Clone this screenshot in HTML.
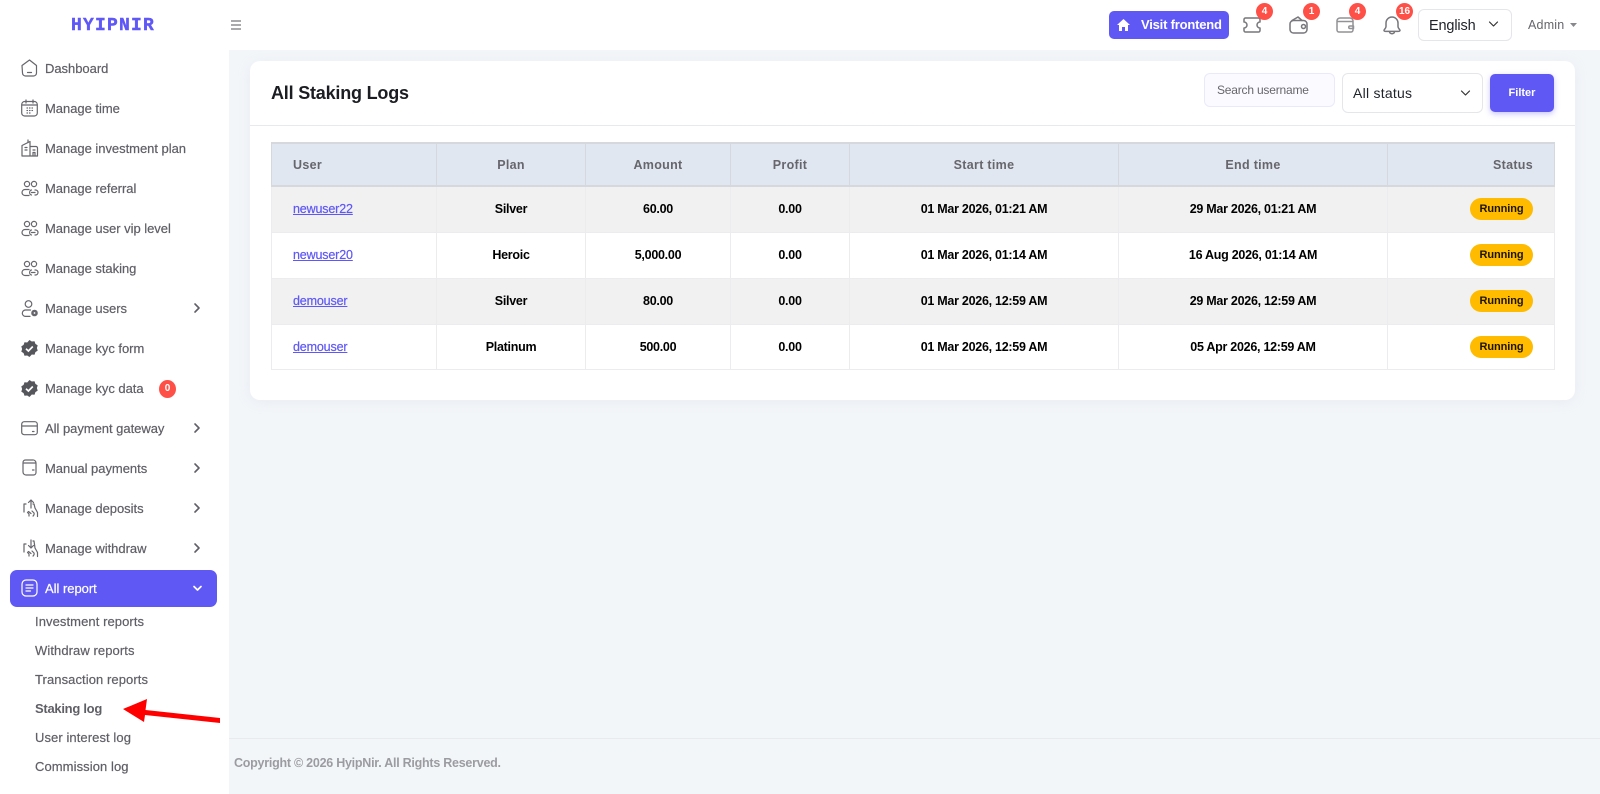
<!DOCTYPE html>
<html lang="en"><head><meta charset="utf-8"><title>All Staking Logs</title>
<style>
*{box-sizing:border-box}
html,body{margin:0;padding:0}
body{width:1600px;height:794px;overflow:hidden;position:relative;background:#f3f6f9;font-family:"Liberation Sans",sans-serif;color:#000}
.a{position:absolute}
.t{position:absolute;white-space:nowrap;line-height:16px}
#side{left:0;top:0;width:229px;height:794px;background:#fff}
#top{left:0;top:0;width:1600px;height:50px;background:#fff}
.m{position:absolute;left:45px;font-size:13px;color:#5f5f66;line-height:16px;white-space:nowrap;letter-spacing:-.03px;transform:translateY(-7px);-webkit-text-stroke:.2px}
.s{position:absolute;left:35px;font-size:13px;color:#5f5f66;line-height:16px;white-space:nowrap;letter-spacing:.08px;transform:translateY(-8px);-webkit-text-stroke:.2px}
svg{position:absolute;overflow:visible}
.ic{fill:none;stroke:#66666c;stroke-width:1.2;stroke-linecap:round;stroke-linejoin:round}
.tic{fill:none;stroke:#77777c;stroke-width:1.5;stroke-linecap:round;stroke-linejoin:round}
.chev{fill:none;stroke:#5f5f66;stroke-width:1.6;stroke-linecap:round;stroke-linejoin:round}
.b{position:absolute;background:#ff5048;color:#fff;border-radius:50%;font-size:10px;font-weight:bold;text-align:center}
#card{left:250px;top:61px;width:1325px;height:339px;background:#fff;border-radius:10px;box-shadow:0 2px 14px rgba(170,180,200,.14)}
table{position:absolute;left:271px;top:142px;width:1283px;border-collapse:collapse;table-layout:fixed;font-size:12.5px}
th{height:43px;background:#e1e7f0;border:1px solid #d5d9de;border-top:2px solid #d5d9de;border-bottom:2px solid #d5d9de;color:#66666c;font-weight:bold;font-size:12.5px;text-align:center;padding:0 21px;letter-spacing:.3px}
td{height:46px;border:1px solid #ececee;text-align:center;padding:0 21px;font-weight:bold;color:#000;letter-spacing:-.27px}
tbody tr:last-child td{height:45px}
tbody tr:nth-child(odd) td{background:#f1f1f1}
.l{text-align:left}.r{text-align:right}
td a{color:#5f58f5;text-decoration:underline;font-weight:normal;letter-spacing:-.15px;-webkit-text-stroke:.2px}
.run{display:inline-block;width:63px;height:22px;line-height:22px;border-radius:11px;background:#ffbb00;color:#1c1400;font-size:11px;font-weight:bold;text-align:center;letter-spacing:-.1px}
</style></head><body>
<div class="a" id="side"></div>
<div class="a" id="top"></div>

<div class="t" style="left:71px;top:17px;font:bold 18px/18px 'Liberation Mono',monospace;letter-spacing:1.2px;color:#5f58f5;-webkit-text-stroke:.4px">HYIPNIR</div>
<svg style="left:231px;top:20px" width="12" height="10"><path d="M0 1h10M0 5h10M0 9h10" stroke="#77777c" stroke-width="1.2" fill="none"/></svg>

<!-- sidebar icons -->
<svg class="ic" style="left:21px;top:59px" width="17" height="18" viewBox="0 0 17 18"><path d="M1 6.500 8.500 1l7 5.500v7.500a3 3 0 0 1-3 3h-8a3 3 0 0 1-3-3z"/><path d="M6.500 13.500h4"/></svg>
<svg class="ic" style="left:21px;top:99px" width="17" height="18" viewBox="0 0 17 18"><rect x=".7" y="2.500" width="15.600" height="14.500" rx="3"/><path d="M1 6h15M5 1v3M12 1v3M6 9h.5M8.500 9H9M11 9h.5M6 11.500h.5M8.500 11.500H9M11 11.500h.5M6 14h.5M8.500 14H9"/></svg>
<svg class="ic" style="left:21px;top:139px" width="17" height="18" viewBox="0 0 17 18"><path d="M1 17V6.500L9 2.500V17M1 17h15.500M9 7.500h6a1.500 1.500 0 0 1 1.500 1.500v8M4 8.500h2M4 11h2M12 11h2M12 13.500h2v3.500h-2z"/><path d="M7 3.500V1"/></svg>
<svg class="ic" style="left:21px;top:181px" width="18" height="15" viewBox="0 0 18 15"><circle cx="6" cy="3" r="2.600"/><circle cx="13" cy="3" r="2.600"/><path d="M8 8.500H4a3 3 0 0 0 0 6h4M10.500 9c-2.500 0-2.500 5 0 5M10.500 11.500h3.500M14 9h.5a2.500 2.500 0 0 1 0 5H14"/></svg>
<svg class="ic" style="left:21px;top:221px" width="18" height="15" viewBox="0 0 18 15"><circle cx="6" cy="3" r="2.600"/><circle cx="13" cy="3" r="2.600"/><path d="M8 8.500H4a3 3 0 0 0 0 6h4M10.500 9c-2.500 0-2.500 5 0 5M10.500 11.500h3.500M14 9h.5a2.500 2.500 0 0 1 0 5H14"/></svg>
<svg class="ic" style="left:21px;top:261px" width="18" height="15" viewBox="0 0 18 15"><circle cx="6" cy="3" r="2.600"/><circle cx="13" cy="3" r="2.600"/><path d="M8 8.500H4a3 3 0 0 0 0 6h4M10.500 9c-2.500 0-2.500 5 0 5M10.500 11.500h3.500M14 9h.5a2.500 2.500 0 0 1 0 5H14"/></svg>
<svg class="ic" style="left:21px;top:300px" width="18" height="17" viewBox="0 0 18 17"><circle cx="7.500" cy="4" r="3.300"/><path d="M9.500 10H4.500a3.200 3.200 0 0 0 0 6.400H9"/><circle cx="13.500" cy="13" r="2.100" stroke-width="2.400"/></svg>
<svg style="left:21px;top:340px" width="17" height="17" viewBox="0 0 17 17"><path fill="#55555c" d="M8.500 0l2.300 1.500 2.700-.2.900 2.600 2.300 1.500-.8 2.600.8 2.600-2.300 1.500-.9 2.600-2.700-.2L8.500 17l-2.300-1.500-2.700.2-.9-2.600L.3 11.600l.8-2.600-.8-2.600 2.300-1.500.9-2.600 2.700.2z"/><path d="M5 8.700l2.400 2.300 4.400-4.500" fill="none" stroke="#fff" stroke-width="1.700"/></svg>
<svg style="left:21px;top:380px" width="17" height="17" viewBox="0 0 17 17"><path fill="#55555c" d="M8.500 0l2.300 1.500 2.700-.2.900 2.600 2.300 1.500-.8 2.600.8 2.600-2.300 1.500-.9 2.600-2.700-.2L8.500 17l-2.300-1.500-2.700.2-.9-2.600L.3 11.600l.8-2.600-.8-2.600 2.300-1.500.9-2.600 2.700.2z"/><path d="M5 8.700l2.400 2.300 4.400-4.500" fill="none" stroke="#fff" stroke-width="1.700"/></svg>
<svg class="ic" style="left:21px;top:421px" width="17" height="15" viewBox="0 0 17 15"><rect x=".7" y=".7" width="15.600" height="13" rx="2.500"/><path d="M1 5h15M11.500 10.500h1.500"/></svg>
<svg class="ic" style="left:22px;top:459px" width="15" height="17" viewBox="0 0 15 17"><path d="M1 4V13a3 3 0 0 0 3 3h7.500a2.500 2.500 0 0 0 2.500-2.500V4M1 4a2.500 2.500 0 0 1 2.500-3h7A3 3 0 0 1 14 4zM10.500 11H12"/></svg>
<svg class="ic" style="left:23px;top:499px" width="15" height="18" viewBox="0 0 15 18"><path d="M3 5H1v8M8 9V1M5.500 3.500 8 1l2.500 2.500M10 5h1l1 4 2.500 4.500v4M6 17v-2l-1.500-1.500 1-1L8 14.500M9 12l2 2c.500 1-.5 3-1 3"/></svg>
<svg class="ic" style="left:23px;top:539px" width="15" height="18" viewBox="0 0 15 18"><path d="M3 5H1v8M8 1v8M5.500 6.500 8 9l2.500-2.500M10 2h1l1 7 2.500 4.500v4M6 17v-2l-1.500-1.500 1-1L8 14.500M9 12l2 2c.500 1-.5 3-1 3"/></svg>

<div class="m" style="top:68px">Dashboard</div>
<div class="m" style="top:108px">Manage time</div>
<div class="m" style="top:148px">Manage investment plan</div>
<div class="m" style="top:188px">Manage referral</div>
<div class="m" style="top:228px">Manage user vip level</div>
<div class="m" style="top:268px">Manage staking</div>
<div class="m" style="top:308px">Manage users</div>
<div class="m" style="top:348px">Manage kyc form</div>
<div class="m" style="top:388px">Manage kyc data</div>
<div class="m" style="top:428px">All payment gateway</div>
<div class="m" style="top:468px">Manual payments</div>
<div class="m" style="top:508px">Manage deposits</div>
<div class="m" style="top:548px">Manage withdraw</div>

<svg class="chev" style="left:194px;top:303px" width="6" height="10"><path d="M1 1l4 4-4 4"/></svg>
<svg class="chev" style="left:194px;top:423px" width="6" height="10"><path d="M1 1l4 4-4 4"/></svg>
<svg class="chev" style="left:194px;top:463px" width="6" height="10"><path d="M1 1l4 4-4 4"/></svg>
<svg class="chev" style="left:194px;top:503px" width="6" height="10"><path d="M1 1l4 4-4 4"/></svg>
<svg class="chev" style="left:194px;top:543px" width="6" height="10"><path d="M1 1l4 4-4 4"/></svg>

<div class="b" style="left:159px;top:380px;width:17px;height:18px;line-height:18px">0</div>

<div class="a" style="left:10px;top:570px;width:207px;height:37px;background:#5f58f5;border-radius:7px"></div>
<svg style="left:21px;top:579px" width="17" height="18" viewBox="0 0 17 18" fill="none" stroke="#fff" stroke-width="1.200" stroke-linecap="round"><rect x="1" y="1" width="15" height="16" rx="4"/><path d="M5 6h7M5 9h7M5 12h4.500"/></svg>
<div class="m" style="top:588px;color:#fff">All report</div>
<svg style="left:192px;top:585px" width="11" height="7" fill="none" stroke="#fff" stroke-width="1.700" stroke-linecap="round" stroke-linejoin="round"><path d="M2 1.500l3.500 3.500L9 1.500"/></svg>

<div class="s" style="top:622px">Investment reports</div>
<div class="s" style="top:651px">Withdraw reports</div>
<div class="s" style="top:680px">Transaction reports</div>
<div class="s" style="top:709px;font-weight:bold;letter-spacing:-.28px;-webkit-text-stroke:0">Staking log</div>
<div class="s" style="top:738px">User interest log</div>
<div class="s" style="top:767px">Commission log</div>

<svg style="left:120px;top:695px" width="105" height="32" viewBox="0 0 105 32"><path fill="#ff0000" d="M3 14 27 4 25.500 15 100 23 100 28 25 20 24 27z"/></svg>

<!-- header -->
<div class="a" style="left:1109px;top:11px;width:120px;height:28px;background:#5f58f5;border-radius:5px"></div>
<svg style="left:1117px;top:19px" width="13" height="12" viewBox="0 0 13 12"><path fill="#fff" d="M6.500 0 13 6h-2v6H8V8H5v4H2V6H0z"/></svg>
<div class="t" style="left:1141px;top:17px;color:#fff;font-size:13px;font-weight:bold;letter-spacing:-.2px">Visit frontend</div>

<svg class="tic" style="left:1243px;top:17px" width="18" height="16" viewBox="0 0 18 16"><path d="M2.500 1h13a1.500 1.500 0 0 1 1.500 1.500V5a3 3 0 0 0 0 6v2.500a1.500 1.500 0 0 1-1.500 1.500h-13A1.500 1.500 0 0 1 1 13.500V11a3 3 0 0 0 0-6V2.500A1.500 1.500 0 0 1 2.500 1z"/></svg>
<svg class="tic" style="left:1289px;top:16px" width="20" height="18" viewBox="0 0 20 18"><rect x="1" y="4.500" width="17" height="12.500" rx="3.500"/><path d="M3 4.500 9 1l4 3.500"/><circle cx="14.500" cy="10.500" r="2"/></svg>
<svg class="tic" style="left:1336px;top:17px;opacity:.8" width="19" height="16" viewBox="0 0 19 16"><path d="M1 4.500V13a2 2 0 0 0 2 2h12a2 2 0 0 0 2-2V4.500M1 4.500A3 3 0 0 1 4 1h10a3 3 0 0 1 3 3.500zM14 9h3.500v2.500H14a1.200 1.200 0 0 1 0-2.500z"/></svg>
<svg class="tic" style="left:1383px;top:16px" width="18" height="19" viewBox="0 0 18 19"><path d="M9 1a6 6 0 0 0-6 6v3.500c0 2-2.200 3-2 4s1 .9 2 .9h12c1 0 1.800-.1 2-.9s-2-2-2-4V7a6 6 0 0 0-6-6zM6.500 15.500c0 3 5 3 5 0"/></svg>

<div class="b" style="left:1256px;top:3px;width:17px;height:17px;line-height:17px">4</div>
<div class="b" style="left:1303px;top:3px;width:17px;height:17px;line-height:17px">1</div>
<div class="b" style="left:1349px;top:3px;width:17px;height:17px;line-height:17px">4</div>
<div class="b" style="left:1396px;top:3px;width:17px;height:17px;line-height:17px">16</div>

<div class="a" style="left:1418px;top:9px;width:94px;height:32px;background:#fff;border:1px solid #e4e6ea;border-radius:6px"></div>
<div class="t" style="left:1429px;top:18px;font-size:14.500px;color:#1e2229;letter-spacing:-.15px">English</div>
<svg style="left:1488px;top:21px" width="11" height="7" fill="none" stroke="#333" stroke-width="1.200" stroke-linecap="round" stroke-linejoin="round"><path d="M1.500 1 5.500 5 9.500 1"/></svg>
<div class="t" style="left:1528px;top:17px;font-size:12.500px;color:#66666c;letter-spacing:.2px">Admin</div>
<svg style="left:1570px;top:23px" width="7" height="4"><path d="M0 0h7L3.500 4z" fill="#88888c"/></svg>

<!-- card -->
<div class="a" id="card"></div>
<div class="a" style="left:250px;top:125px;width:1325px;height:1px;background:#e8e9ec"></div>
<div class="t" style="left:271px;top:83px;font-size:18px;line-height:20px;font-weight:bold;color:#1b1d22;letter-spacing:-.2px">All Staking Logs</div>

<div class="a" style="left:1204px;top:73px;width:131px;height:34px;background:#fbfbff;border:1px solid #e9e9fb;border-radius:6px"></div>
<div class="t" style="left:1217px;top:82px;font-size:12px;color:#66666c;letter-spacing:-.2px">Search username</div>
<div class="a" style="left:1342px;top:73px;width:141px;height:40px;background:#fff;border:1px solid #e4e6ea;border-radius:6px"></div>
<div class="t" style="left:1353px;top:85px;font-size:14px;color:#1e2229;letter-spacing:.25px">All status</div>
<svg style="left:1460px;top:90px" width="11" height="7" fill="none" stroke="#333" stroke-width="1.200" stroke-linecap="round" stroke-linejoin="round"><path d="M1.500 1 5.500 5 9.500 1"/></svg>
<div class="a" style="left:1490px;top:74px;width:64px;height:38px;background:#5f58f5;border-radius:5px;box-shadow:0 2px 6px rgba(95,88,245,.35);color:#fff;font-size:11px;font-weight:bold;text-align:center;line-height:39px">Filter</div>

<table>
<colgroup><col style="width:165px"><col style="width:149px"><col style="width:145px"><col style="width:119px"><col style="width:269px"><col style="width:269px"><col style="width:167px"></colgroup>
<thead><tr><th class="l">User</th><th>Plan</th><th>Amount</th><th>Profit</th><th>Start time</th><th>End time</th><th class="r">Status</th></tr></thead>
<tbody>
<tr><td class="l"><a>newuser22</a></td><td>Silver</td><td>60.00</td><td>0.00</td><td>01 Mar 2026, 01:21 AM</td><td>29 Mar 2026, 01:21 AM</td><td class="r"><span class="run">Running</span></td></tr>
<tr><td class="l"><a>newuser20</a></td><td>Heroic</td><td>5,000.00</td><td>0.00</td><td>01 Mar 2026, 01:14 AM</td><td>16 Aug 2026, 01:14 AM</td><td class="r"><span class="run">Running</span></td></tr>
<tr><td class="l"><a>demouser</a></td><td>Silver</td><td>80.00</td><td>0.00</td><td>01 Mar 2026, 12:59 AM</td><td>29 Mar 2026, 12:59 AM</td><td class="r"><span class="run">Running</span></td></tr>
<tr><td class="l"><a>demouser</a></td><td>Platinum</td><td>500.00</td><td>0.00</td><td>01 Mar 2026, 12:59 AM</td><td>05 Apr 2026, 12:59 AM</td><td class="r"><span class="run">Running</span></td></tr>
</tbody></table>

<!-- footer -->
<div class="a" style="left:229px;top:738px;width:1371px;height:1px;background:#e8eaee"></div>
<div class="t" style="left:234px;top:755px;font-size:12.500px;font-weight:bold;color:#9b9ca1;letter-spacing:-.25px">Copyright © 2026 HyipNir. All Rights Reserved.</div>
</body></html>
